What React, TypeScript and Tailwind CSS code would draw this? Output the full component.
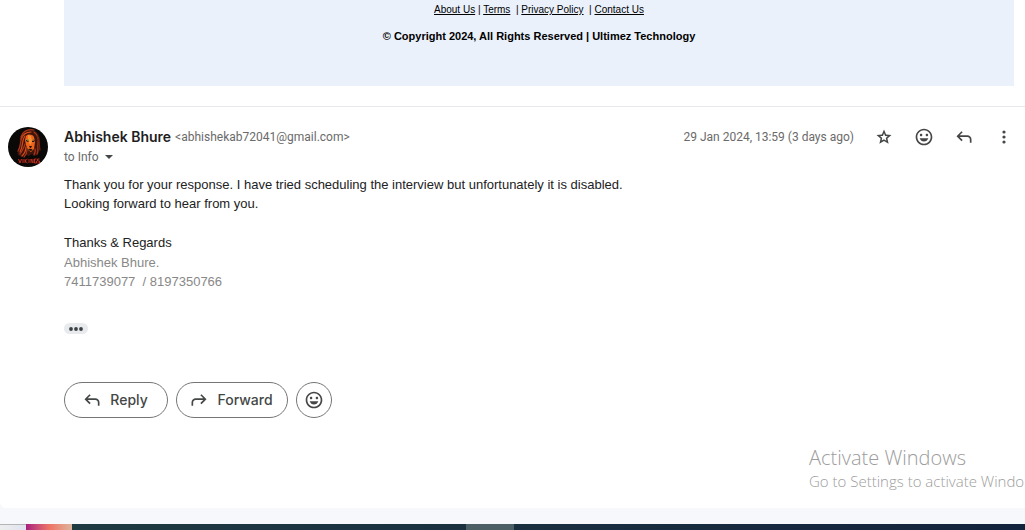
import type { ReactNode } from "react";

const REPLY =
  "M760-200v-160q0-50-35-85t-85-35H273l144 144-57 56-240-240 240-240 57 56-144 144h367q83 0 141.5 58.5T840-360v160h-80Z";
const STAR =
  "m354-287 126-76 126 77-33-144 111-96-146-13-58-136-58 135-146 13 111 97-33 143ZM233-120l65-281L80-590l288-25 112-265 112 265 288 25-218 189 65 281-247-149-247 149Z";

function Symbol({ d, className }: { d: string; className: string }) {
  return (
    <svg viewBox="0 -960 960 960" fill="currentColor" className={className} aria-hidden="true">
      <path d={d} />
    </svg>
  );
}

function Smile() {
  return (
    <svg viewBox="0 0 24 24" fill="currentColor" className="size-5" aria-hidden="true">
      <path d="M11.99 2C6.47 2 2 6.48 2 12s4.47 10 9.99 10C17.52 22 22 17.52 22 12S17.52 2 11.99 2zM12 20c-4.42 0-8-3.58-8-8s3.58-8 8-8 8 3.58 8 8-3.58 8-8 8zm3.5-9c.83 0 1.5-.67 1.5-1.5S16.33 8 15.5 8 14 8.67 14 9.5s.67 1.5 1.5 1.5zm-7 0c.83 0 1.5-.67 1.5-1.5S9.33 8 8.5 8 7 8.67 7 9.5 7.67 11 8.5 11z" />
      <path d="M6.8 13.5h10.4c-.8 2.4-2.8 4-5.2 4s-4.4-1.600-5.200-4z" />
    </svg>
  );
}

function Avatar() {
  return (
    <svg viewBox="0 0 40 40" className="size-10 shrink-0" role="img" aria-label="Abhishek Bhure">
      <circle cx="20" cy="20" r="20" fill="#0b0808" />
      <path
        d="M15 5c5-4 12-3 15 2 3 4 2 9 2 13s-1 7-4 9l-4-2-3 2-4-1-3 2-4-2c-1-4 1-8 2-11-1-5 0-9 3-12z"
        fill="#3d150c"
      />
      <g fill="none" strokeWidth="1.200" strokeLinecap="round">
        <path d="M26 3c-6-1-11 1-13 7" stroke="#a5361a" />
        <path d="M23 5c-5 0-8 2-10 7" stroke="#e04f1c" />
        <path d="M15 9c-4 5-1 9-5 15" stroke="#a5361a" />
        <path d="M17 9c-4 5-1 9-5 16" stroke="#d84917" />
        <path d="M17 17c-1 4-3 7-5 10" stroke="#a5361a" />
        <path d="M18 20c0 4-2 7-4 9" stroke="#e04d15" />
        <path d="M19 23c0 3-1 5-3 7" stroke="#a5361a" />
        <path d="M26 5c4 3 5 7 4 12s1 6-1 10" stroke="#a5361a" />
        <path d="M29 9c3 4 2 9 3 14" stroke="#74250f" />
        <path d="M27 22c1 2 0 4-1 6" stroke="#a5361a" />
      </g>
      <path d="M18 9c2-2 6-2 8 1l1 5-1 7-3 3-3-2-2-5-1-5z" fill="#ec641c" />
      <path d="M20 8l3 1 1 5-1 4-2-2-1-4z" fill="#f68f34" />
      <path d="M18 13l3 1-1 1-2-1zM24 14l3-1-1 2h-2zM21 19h3l-1 2-1 0zM20 23c2-2 3-1 5 0l-2 1z" fill="#25100a" />
      <path d="M19 13h2M25 13h1" stroke="#519448" strokeWidth="1" />
      <path
        d="M10.500 32l1.500 4 1.500-4M15 32v4M17 32v4M19.500 32l-2.500 2 2.500 2M21 32v4M23 36v-4l2 4v-4M28.500 32h-2v4h2v-2M31.500 32h-2v2h2v2h-2"
        fill="none"
        stroke="#c62c1a"
        strokeWidth="1"
      />
    </svg>
  );
}

function IconButton({ label, children }: { label: string; children: ReactNode }) {
  return (
    <button type="button" aria-label={label} className="flex size-5 items-center justify-center">
      {children}
    </button>
  );
}

function FooterLink({ children }: { children: ReactNode }) {
  return (
    <a href="#" className="underline">
      {children}
    </a>
  );
}

const pill =
  "flex h-9 items-center justify-center rounded-full border border-[#747775] text-sm font-medium text-[#444746]";

export default function App() {
  return (
    <div className="flex min-h-screen flex-col overflow-hidden bg-[#f6f8fc] font-['Liberation_Sans',sans-serif]">
      <main className="relative flex-1 rounded-bl-md bg-white">
        <footer className="mr-[11px] ml-16 h-[86px] bg-[#eaf1fb] text-center text-black">
          <p className="pt-1 text-[10px] leading-3 whitespace-pre">
            <FooterLink>About Us</FooterLink> | <FooterLink>Terms</FooterLink>
            {"  | "}
            <FooterLink>Privacy Policy</FooterLink>
            {"  | "}
            <FooterLink>Contact Us</FooterLink>
          </p>
          <p className="mt-3 text-[11px] leading-4 font-bold">
            © Copyright 2024, All Rights Reserved | Ultimez Technology
          </p>
        </footer>

        <article className="mt-5 flex gap-4 border-t border-[#e6e8eb] pt-5 pl-2">
          <Avatar />
          <div className="min-w-0 flex-1">
            <header className="flex items-start justify-between pr-[11px] font-['Roboto',sans-serif]">
              <div>
                <h3 className="flex items-center gap-1 leading-5">
                  <span className="font-['Inter',sans-serif] text-sm font-semibold text-[#1f1f1f]">Abhishek Bhure</span>
                  <span className="text-xs leading-5 text-[#6a6a6a]">&lt;abhishekab72041@gmail.com&gt;</span>
                </h3>
                <button type="button" className="flex items-center gap-1 text-xs leading-5 text-[#6a6a6a]">
                  to Info
                  <svg viewBox="0 0 12 12" className="size-3" aria-hidden="true">
                    <path d="M2 4h8l-4 4z" fill="#444746" />
                  </svg>
                </button>
              </div>
              <div className="flex items-center gap-5 text-[#444746]">
                <time className="text-xs leading-5 text-[#6a6a6a]">29 Jan 2024, 13:59 (3 days ago)</time>
                <IconButton label="Star">
                  <Symbol d={STAR} className="size-[18px]" />
                </IconButton>
                <IconButton label="Add reaction">
                  <Smile />
                </IconButton>
                <IconButton label="Reply">
                  <Symbol d={REPLY} className="size-5" />
                </IconButton>
                <IconButton label="More">
                  <svg viewBox="0 0 20 20" fill="currentColor" className="size-5" aria-hidden="true">
                    <circle cx="10" cy="5" r="1.600" />
                    <circle cx="10" cy="10" r="1.600" />
                    <circle cx="10" cy="15" r="1.600" />
                  </svg>
                </IconButton>
              </div>
            </header>

            <div className="mt-2 text-[13px] leading-[19px] text-[#222222]">
              <p>Thank you for your response. I have tried scheduling the interview but unfortunately it is disabled.</p>
              <p>Looking forward to hear from you.</p>
              <p className="mt-5 leading-5">Thanks &amp; Regards</p>
              <p className="text-[#888888]">Abhishek Bhure.</p>
              <p className="whitespace-pre text-[#888888]">7411739077  / 8197350766</p>
            </div>

            <button
              type="button"
              aria-label="Show trimmed content"
              className="mt-8 flex h-[11px] w-6 items-center justify-center rounded-full bg-[#e8eaed]"
            >
              <svg viewBox="0 0 14 4" className="h-1 w-3.5" fill="#3c4043" aria-hidden="true">
                <circle cx="2" cy="2" r="1.900" />
                <circle cx="7" cy="2" r="1.900" />
                <circle cx="12" cy="2" r="1.900" />
              </svg>
            </button>

            <div className="mt-12 mb-8 flex gap-2 font-['Inter',sans-serif]">
              <button type="button" className={`${pill} w-[104px] gap-2 pr-0.5`}>
                <Symbol d={REPLY} className="size-5" />
                Reply
              </button>
              <button type="button" className={`${pill} w-28 gap-2 pr-0.5`}>
                <Symbol d={REPLY} className="size-5 -scale-x-100" />
                Forward
              </button>
              <button type="button" aria-label="Add reaction" className={`${pill} w-9`}>
                <Smile />
              </button>
            </div>
          </div>
        </article>

        <div className="absolute right-0 bottom-4 w-54 font-['Open_Sans',sans-serif] font-light whitespace-nowrap text-[#9c9c9c]">
          <p className="text-xl leading-6">Activate Windows</p>
          <p className="text-[15px] leading-[22px]">Go to Settings to activate Windo</p>
        </div>
      </main>

      <div className="h-4" />
      <div className="flex h-1.5 bg-linear-to-r from-[#203c42] to-[#14233d]">
        <div className="w-[26px] border-t border-[#b5b5b5] bg-linear-to-r from-[#eeeeee] to-[#dfe3ee]" />
        <div className="w-[46px] bg-linear-to-r from-[#a81c7c] via-[#ee7266] to-[#dcb49c]" />
        <div className="ml-[394px] w-12 bg-[#4c5f65]" />
      </div>
    </div>
  );
}
